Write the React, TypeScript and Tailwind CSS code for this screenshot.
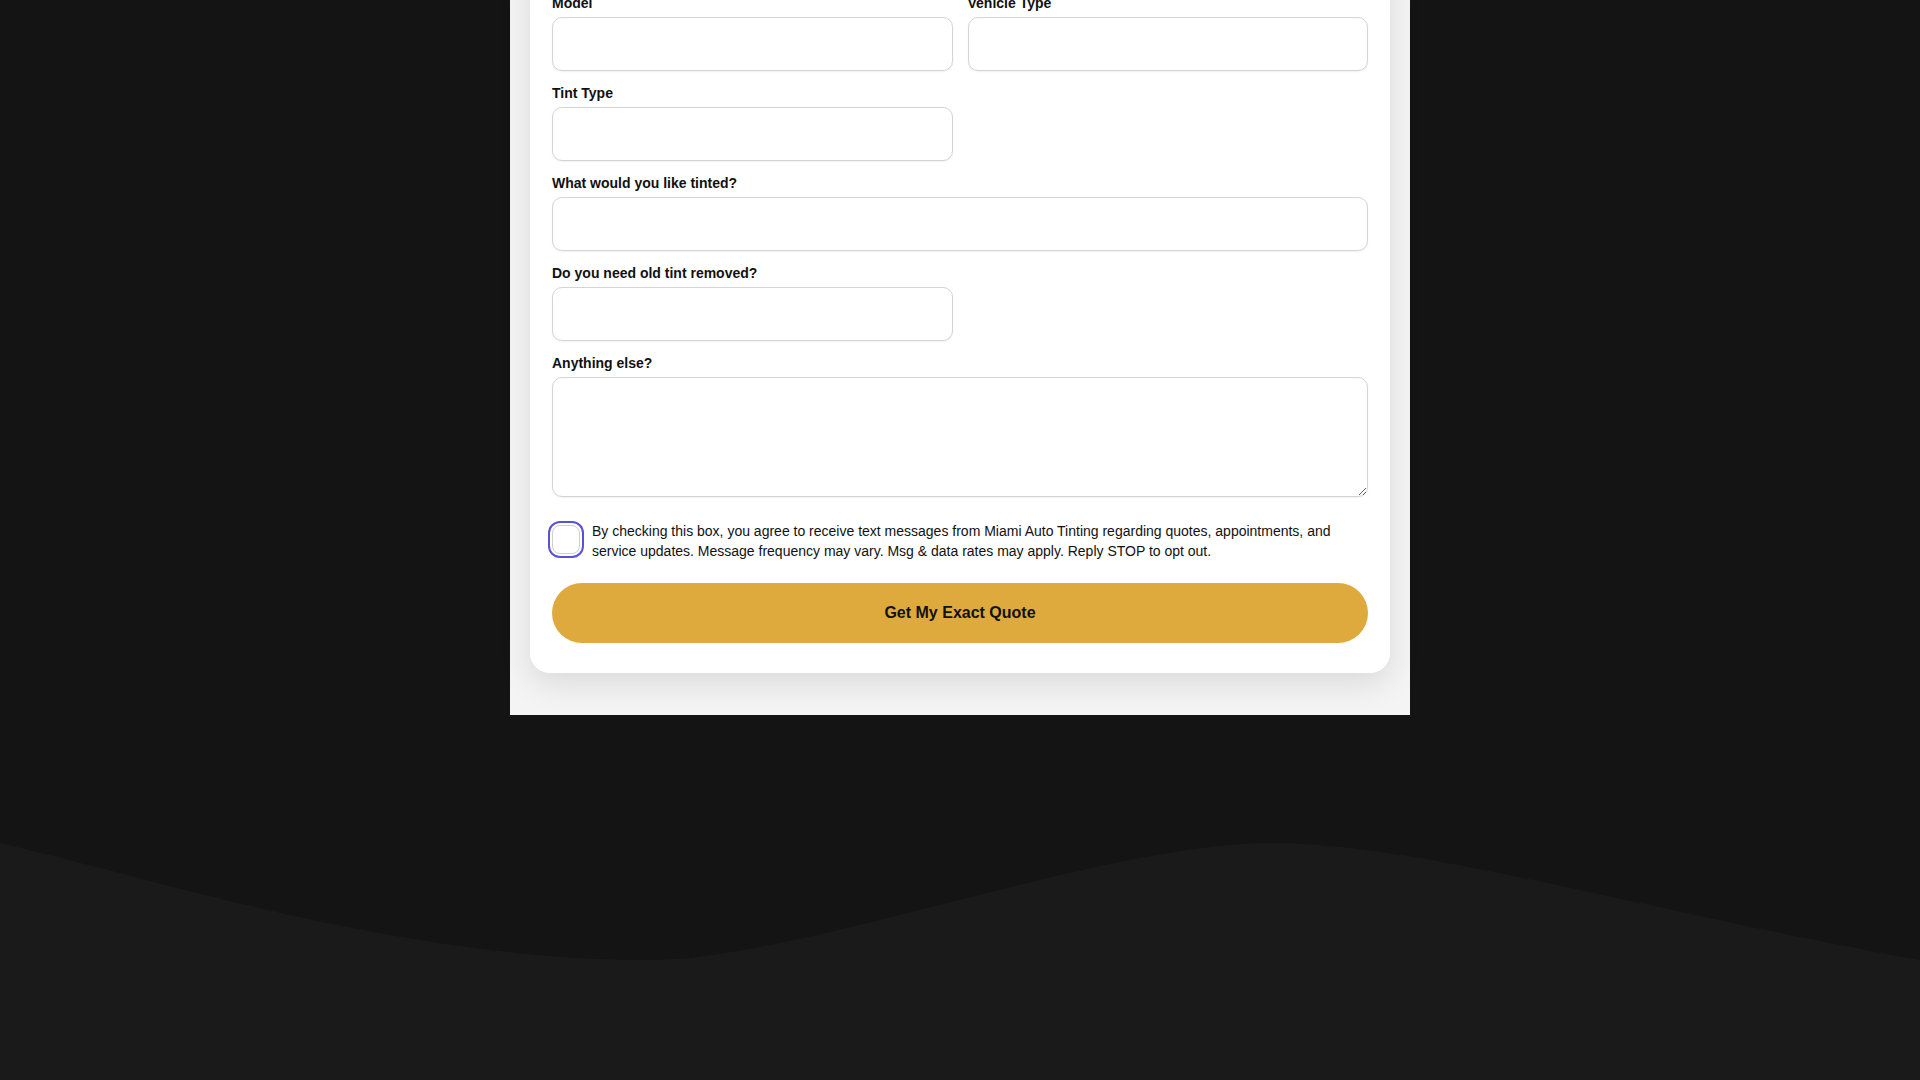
import React, { useState } from 'react';

type Field = {
  id: string;
  label: string;
  wide?: boolean;
  multiline?: boolean;
};

const fields: Field[] = [
  { id: 'model', label: 'Model' },
  { id: 'vehicleType', label: 'Vehicle Type' },
  { id: 'tintType', label: 'Tint Type' },
  { id: 'spacer', label: '' },
  { id: 'areas', label: 'What would you like tinted?', wide: true },
  { id: 'removal', label: 'Do you need old tint removed?' },
  { id: 'spacer2', label: '' },
  { id: 'notes', label: 'Anything else?', wide: true, multiline: true },
];

const inputClass =
  'block w-full rounded-[10px] border border-[#d4d4d4] bg-white px-3 text-sm text-[#111] shadow-[0_1px_2px_rgba(0,0,0,0.06)] outline-none focus:border-[#deaa3e]';

function WaveBackdrop() {
  return (
    <svg
      className="absolute bottom-0 left-0 h-[238px] w-full"
      viewBox="0 0 1920 238"
      preserveAspectRatio="none"
      aria-hidden="true"
    >
      <path
        d="M0,1 C150,35 400,118 649,118 C800,118 1100,1 1273,1 C1420,1 1650,70 1920,118 L1920,238 L0,238 Z"
        fill="#1a1a1a"
      />
    </svg>
  );
}

export default function App() {
  const [values, setValues] = useState<Record<string, string>>({});
  const [consent, setConsent] = useState(false);

  const update = (id: string, value: string) => setValues((v) => ({ ...v, [id]: value }));

  return (
    <div className="relative h-screen overflow-hidden bg-[#141414] font-['Liberation_Sans',Arial,sans-serif]">
      <WaveBackdrop />

      <div className="relative mx-auto -mt-[39px] w-[900px] bg-[#f4f4f4] px-5 pb-[42px]">
        <div className="rounded-[20px] bg-white px-[22px] pt-8 pb-[30px] shadow-[0_10px_32px_rgba(0,0,0,0.11)]">
          <form className="grid grid-cols-2 gap-x-[15px] gap-y-3" onSubmit={(e) => e.preventDefault()}>
            {fields.map((field) => {
              if (field.id.startsWith('spacer')) return <div key={field.id} />;
              return (
                <div key={field.id} className={field.wide ? 'col-span-2' : ''}>
                  <label
                    htmlFor={field.id}
                    className="mb-1 block text-sm leading-5 font-bold text-[#111]"
                  >
                    {field.label}
                  </label>
                  {field.multiline ? (
                    <textarea
                      id={field.id}
                      value={values[field.id] ?? ''}
                      onChange={(e) => update(field.id, e.target.value)}
                      className={`${inputClass} h-[120px] py-2`}
                    />
                  ) : (
                    <input
                      id={field.id}
                      type="text"
                      value={values[field.id] ?? ''}
                      onChange={(e) => update(field.id, e.target.value)}
                      className={`${inputClass} h-[54px]`}
                    />
                  )}
                </div>
              );
            })}
          </form>

          {/* SMS consent */}
          <label className="mt-[24px] flex items-start gap-[12px]">
            <input
              type="checkbox"
              checked={consent}
              onChange={(e) => setConsent(e.target.checked)}
              className="mt-[4px] h-[29px] w-[28px] shrink-0 appearance-none rounded-[8px] border border-[#cfcfcf] bg-white ring-2 ring-[#5a52d5] ring-offset-2 checked:bg-[#deaa3e]"
            />
            <span className="text-sm leading-5 text-[#111]">
              By checking this box, you agree to receive text messages from Miami Auto Tinting regarding
              quotes, appointments, and service updates. Message frequency may vary. Msg &amp; data rates
              may apply. Reply STOP to opt out.
            </span>
          </label>

          <button
            type="submit"
            className="mt-[22px] block h-[60px] w-full rounded-full bg-[#deaa3e] text-base font-bold text-[#111]"
          >
            Get My Exact Quote
          </button>
        </div>
      </div>
    </div>
  );
}
